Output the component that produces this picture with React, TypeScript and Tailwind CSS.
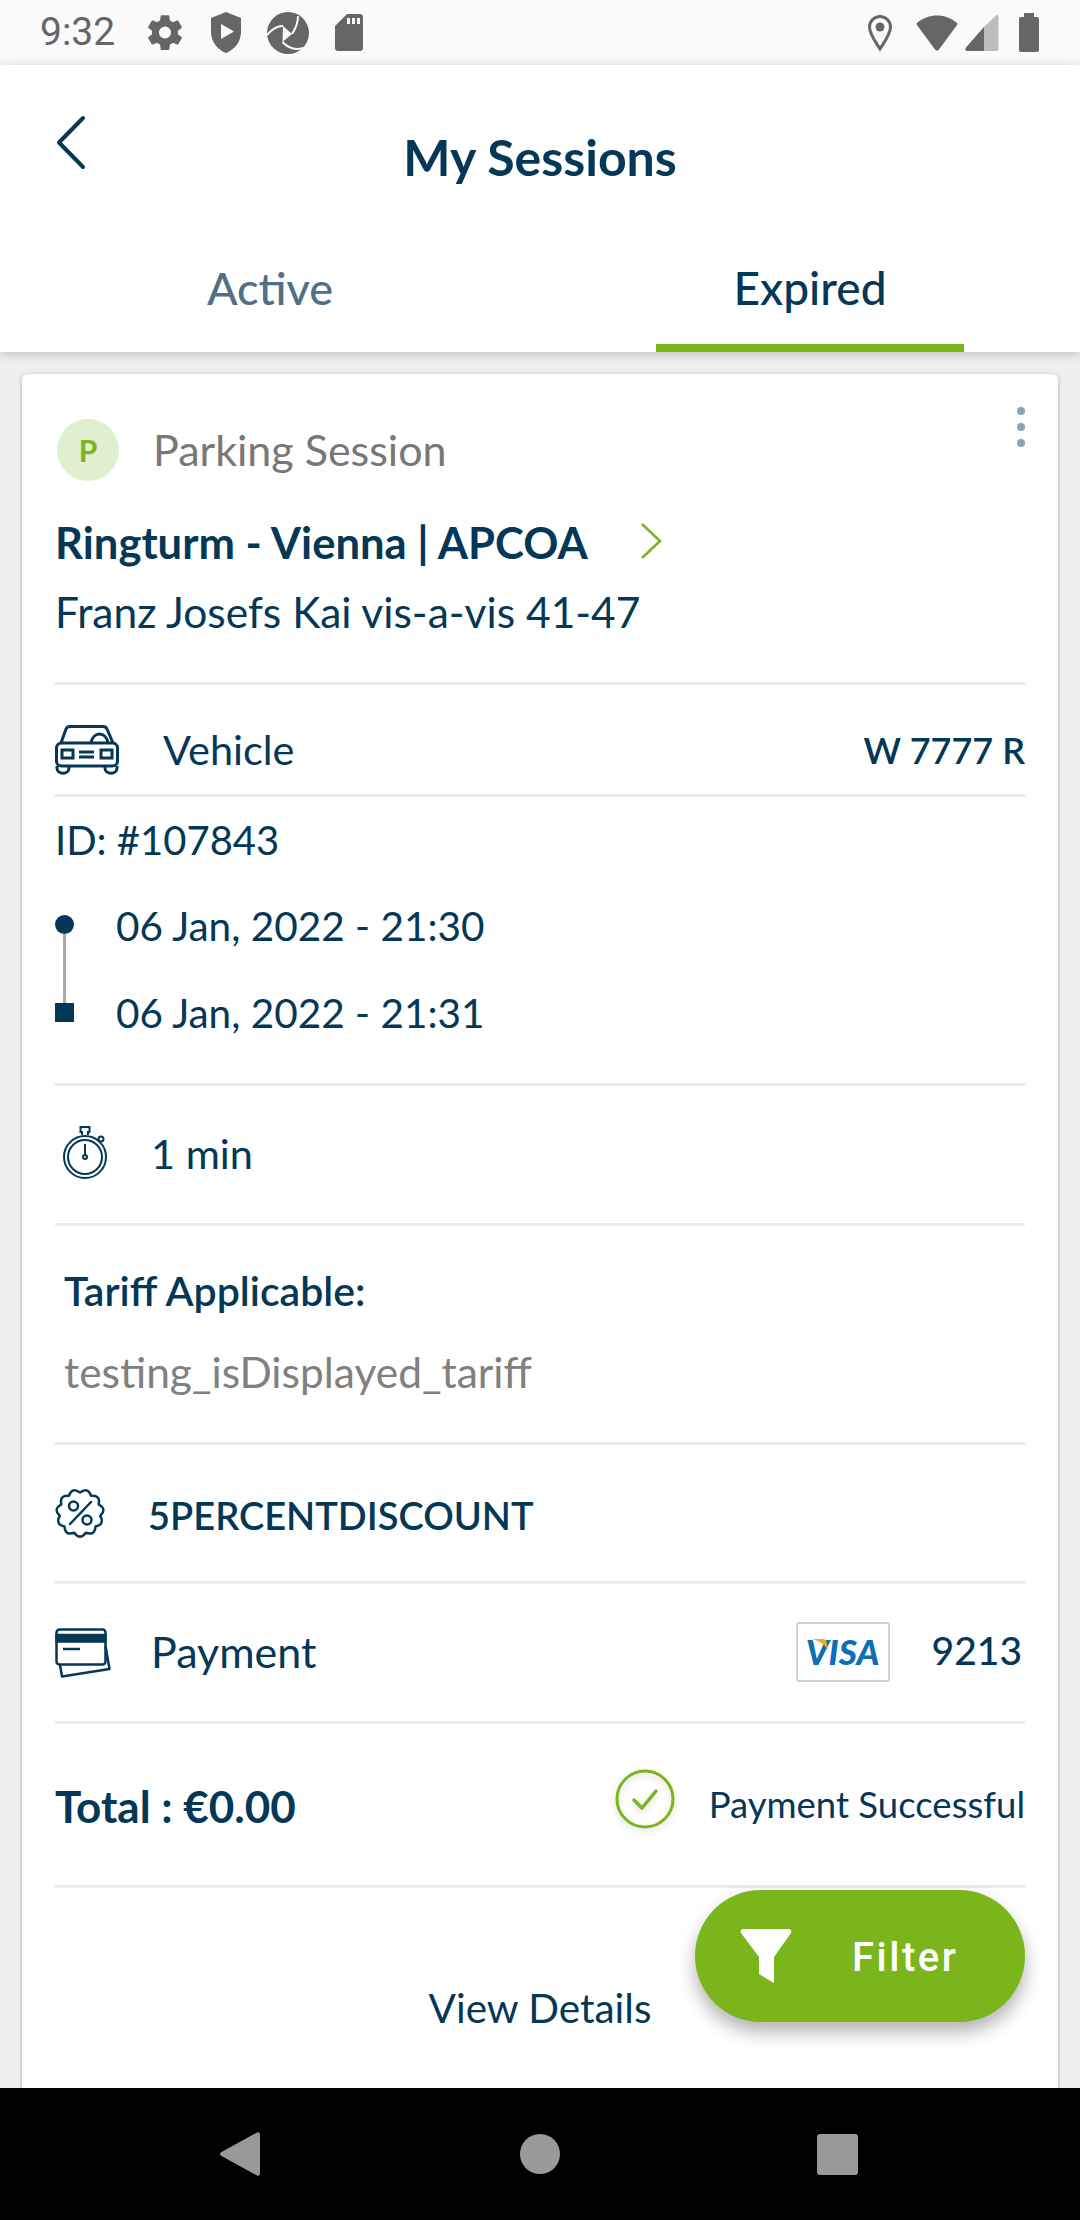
const navy = "#053757";

// scalloped badge outline for the voucher icon
const badgePath = (() => {
  const n = 11;
  const cx = 25;
  const cy = 26;
  const pt = (r: number, a: number) => `${(cx + r * Math.cos(a)).toFixed(2)} ${(cy + r * Math.sin(a)).toFixed(2)}`;
  let d = `M${pt(20.5, -Math.PI / 2)}`;
  for (let i = 0; i < n; i++) {
    const a = -Math.PI / 2 + (i * 2 * Math.PI) / n;
    const step = (2 * Math.PI) / n;
    d += ` Q${pt(27.5, a + step / 2)} ${pt(20.5, a + step)}`;
  }
  return d + " Z";
})();

function StatusBar() {
  return (
    <div className="flex h-[65px] shrink-0 items-center bg-[#fafafa] pl-[40px] pr-[41px] text-[#666666]">
      <span className="w-[74px] text-[39px] leading-[65px] font-['Roboto',sans-serif]">9:32</span>
      {/* gear */}
      <svg className="ml-[34px] h-[37px] w-[34px]" viewBox="2.2 2 19.6 20" fill="currentColor">
        <path
          fillRule="evenodd"
          d="M19.4 13c.04-.33.06-.66.06-1s-.02-.67-.06-1l2.11-1.65a.5.5 0 0 0 .12-.64l-2-3.46a.5.5 0 0 0-.61-.22l-2.49 1a7.3 7.3 0 0 0-1.69-.98l-.38-2.65A.49.49 0 0 0 14 2h-4a.49.49 0 0 0-.49.42l-.38 2.65c-.61.25-1.17.59-1.69.98l-2.49-1a.5.5 0 0 0-.61.22l-2 3.46a.5.5 0 0 0 .12.64L4.57 11c-.04.33-.07.66-.07 1s.03.67.07 1l-2.11 1.65a.5.5 0 0 0-.12.64l2 3.46c.13.22.39.3.61.22l2.49-1c.52.4 1.08.73 1.69.98l.38 2.65c.03.24.24.42.49.42h4c.25 0 .46-.18.49-.42l.38-2.65c.61-.25 1.17-.59 1.69-.98l2.49 1c.22.08.48 0 .61-.22l2-3.46a.5.5 0 0 0-.12-.64L19.4 13zM12 15.5a3.5 3.5 0 1 1 0-7 3.5 3.5 0 0 1 0 7z"
        />
      </svg>
      {/* shield with play */}
      <svg className="ml-[28px] h-[41px] w-[32px]" viewBox="0 0 32 41" fill="currentColor">
        <path
          fillRule="evenodd"
          d="M16 0 L31 6 V20 C31 30 24 38 16 41 C8 38 1 30 1 20 V6 Z M11 12 V27 L24 19.5 Z"
        />
      </svg>
      {/* aperture */}
      <svg className="ml-[25px] h-[44px] w-[42px]" viewBox="0 0 42 44">
        <circle cx="21" cy="22" r="21" fill="currentColor" />
        <path d="M16 15 L25 23 L15.5 31 Z" fill="#fafafa" />
        <g fill="none" stroke="#fafafa" strokeWidth="2">
          <path d="M16 15 C10 15 5 18 0 24" />
          <path d="M25 23 C29 17 31 12 31 5" />
          <path d="M15.5 31 C22 38 29 39 36 37" />
        </g>
      </svg>
      {/* sd card */}
      <svg className="ml-[26px] h-[37px] w-[28px]" viewBox="0 0 28 37" fill="currentColor">
        <path
          fillRule="evenodd"
          d="M12 0 H25 C26.7 0 28 1.3 28 3 V34 C28 35.7 26.7 37 25 37 H3 C1.3 37 0 35.7 0 34 V12 Z M12 4 V10 H15 V4 Z M17 4 V10 H20 V4 Z M22 4 V10 H25 V4 Z"
        />
      </svg>
      {/* location pin */}
      <svg className="ml-auto h-[38px] w-[26px]" viewBox="0 0 26 38">
        <path
          d="M13 35 C8 27 2.5 20 2.5 13 A10.5 10.5 0 0 1 23.5 13 C23.5 20 18 27 13 35 Z"
          fill="none"
          stroke="currentColor"
          strokeWidth="3"
        />
        <circle cx="13" cy="13" r="4.5" fill="currentColor" />
      </svg>
      {/* wifi */}
      <svg className="ml-[23px] h-[36px] w-[42px]" viewBox="0 0 42 36" fill="currentColor">
        <path d="M1 8 C12 -2 30 -2 41 8 C41.6 8.7 41.6 9.2 41 10 L23 34.5 C22 36 20 36 19 34.5 L1 10 C0.4 9.2 0.4 8.7 1 8 Z" />
      </svg>
      {/* signal */}
      <svg className="ml-[7px] h-[36px] w-[34px]" viewBox="0 0 34 36">
        <path d="M19 12 L0.5 33 C0 34.5 0.5 36 2 36 H19 Z" fill="currentColor" />
        <path d="M19 12 L31 0.5 C32.5 -0.5 33.5 0.5 33.5 2 V34 C33.5 35.3 32.8 36 31.5 36 H19 Z" fill="#bdbdbd" />
      </svg>
      {/* battery */}
      <svg className="ml-[20px] h-[39px] w-[20px]" viewBox="0 0 20 39" fill="currentColor">
        <path d="M5 0 H15 V4 H18 C19.2 4 20 4.8 20 6 V37 C20 38.2 19.2 39 18 39 H2 C0.8 39 0 38.2 0 37 V6 C0 4.8 0.8 4 2 4 H5 Z" />
      </svg>
    </div>
  );
}

function Header() {
  return (
    <div className="relative z-10 shrink-0 bg-white shadow-[0_2px_10px_rgba(0,0,0,0.22)]">
      <div className="relative flex h-[172px] justify-center pt-[68px]">
        <svg className="absolute left-[55px] top-[50px] h-[55px] w-[32px]" viewBox="0 0 32 55" fill="none">
          <path d="M28 3 L4 27.5 L28 52" stroke={navy} strokeWidth="4" strokeLinecap="round" strokeLinejoin="round" />
        </svg>
        <h1 className="text-[50px] leading-[48px] font-bold text-[#053757]">My Sessions</h1>
      </div>
      <div className="flex h-[115px]">
        <div className="flex w-[540px] justify-center pt-[29px] text-[45px] leading-[44px] font-medium text-[#4f7088]">
          Active
        </div>
        <div className="relative flex w-[540px] justify-center pt-[29px] text-[46px] leading-[44px] font-medium text-[#053757]">
          Expired
          <div className="absolute bottom-0 left-[116px] h-[8px] w-[308px] bg-[#7ab51b]" />
        </div>
      </div>
    </div>
  );
}

function Car() {
  return (
    <svg className="h-[50px] w-[64px]" viewBox="0 0 64 50" fill="none" stroke={navy} strokeWidth="3">
      <path d="M6 18 L11 4 C11.6 2.5 13 1.5 15 1.5 H48 C50 1.5 51.4 2.5 52 4 L58 18" strokeLinejoin="round" />
      <path d="M36 18 C38 6 51 6 53 18" />
      <rect x="1.5" y="18" width="61" height="23" rx="5" />
      <rect x="7" y="25" width="11" height="8" />
      <rect x="46" y="25" width="11" height="8" />
      <path d="M24 27 H39 M24 32 H39" />
      <path d="M2 41 V43 C2 50 14 50 14 43 V41 M50 41 V43 C50 50 62 50 62 43 V41" />
    </svg>
  );
}

function Stopwatch() {
  return (
    <svg className="mb-[6px] h-[56px] w-[46px]" viewBox="0 0 46 56" fill="none" stroke={navy} strokeWidth="2">
      <circle cx="23" cy="33" r="21" />
      <circle cx="23" cy="33" r="17" />
      <path d="M20 11 V8 H18.5 V3 H27.5 V8 H26 V11" />
      <path d="M23 20 V31" />
      <circle cx="23" cy="33" r="2" />
      <circle cx="39" cy="15" r="2.5" />
    </svg>
  );
}

function Discount() {
  return (
    <svg className="h-[52px] w-[50px]" viewBox="0 0 50 52" fill="none" stroke={navy} strokeWidth="2.5">
      <path d={badgePath} strokeLinejoin="round" />
      <circle cx="18.5" cy="19" r="4.5" />
      <circle cx="32" cy="33" r="4.5" />
      <path d="M15 37 L36 15" strokeLinecap="round" />
    </svg>
  );
}

function CardIcon() {
  return (
    <svg className="h-[50px] w-[56px]" viewBox="0 0 56 50" fill="none" stroke={navy} strokeWidth="2.5">
      <rect x="1.5" y="1.5" width="49" height="35" rx="3" />
      <path d="M1.5 7 H50.5 V13.5 H1.5 Z" fill={navy} />
      <path d="M8 21 H25" />
      <path d="M5 37 L7 48.5 L54.5 41 L50.5 18" strokeLinejoin="round" />
    </svg>
  );
}

export default function App() {
  return (
    <div className="relative flex h-[2220px] w-[1080px] flex-col overflow-hidden bg-[#efefef] font-['Lato',sans-serif] text-[#053757]">
      <StatusBar />
      <Header />

      <div className="min-h-0 flex-1 overflow-hidden px-[22px] pt-[22px]">
        <div className="rounded-[6px] bg-white px-[33px] pb-[80px] shadow-[0_1px_4px_rgba(0,0,0,0.3)]">
          {/* location */}
          <div className="relative h-[311px] border-b-[3px] border-[#ebebeb] pt-[45px]">
            <div className="flex h-[62px] items-center">
              <div className="ml-[2px] flex h-[62px] w-[62px] items-center justify-center rounded-full bg-[#dfefcf] text-[30px] font-bold text-[#7ab51b]">
                P
              </div>
              <span className="ml-[34px] text-[43px] text-[#777777]">Parking Session</span>
            </div>
            <div className="absolute right-0 top-[33px] flex flex-col gap-[8px]">
              <div className="h-[8px] w-[8px] rounded-full bg-[#8aa4ba]" />
              <div className="h-[8px] w-[8px] rounded-full bg-[#8aa4ba]" />
              <div className="h-[8px] w-[8px] rounded-full bg-[#8aa4ba]" />
            </div>
            <div className="mt-[36px] flex h-[50px] items-center">
              <span className="text-[43.6px] leading-[50px] font-bold">Ringturm - Vienna | APCOA</span>
              <svg className="ml-[52px] mb-[3px] h-[38px] w-[22px]" viewBox="0 0 22 38" fill="none">
                <path d="M2 2 L20 19 L2 36" stroke="#7ab51b" strokeWidth="2.5" />
              </svg>
            </div>
            <div className="mt-[20px] text-[42.5px] leading-[50px]">Franz Josefs Kai vis-a-vis 41-47</div>
          </div>

          {/* vehicle */}
          <div className="flex h-[112px] items-center border-b-[3px] border-[#ebebeb] pt-[20px]">
            <Car />
            <span className="ml-[44px] text-[41.5px]">Vehicle</span>
            <span className="ml-auto text-[36px] font-semibold">W 7777 R</span>
          </div>

          {/* times */}
          <div className="h-[289px] border-b-[3px] border-[#ebebeb] pt-[21px]">
            <div className="text-[40px] leading-[44px]">ID: #107843</div>
            <div className="mt-[42px] flex">
              <div className="mt-[11px] flex w-[19px] flex-col items-center">
                <div className="h-[19px] w-[19px] rounded-full bg-[#053757]" />
                <div className="h-[69px] w-[3px] bg-[#aaaaaa]" />
                <div className="h-[19px] w-[19px] bg-[#053757]" />
              </div>
              <div className="ml-[42px] flex flex-col gap-[43px] text-[40.5px] leading-[44px]">
                <span>06 Jan, 2022 - 21:30</span>
                <span>06 Jan, 2022 - 21:31</span>
              </div>
            </div>
          </div>

          {/* duration */}
          <div className="flex h-[140px] items-center border-b-[3px] border-[#ebebeb] pl-[7px]">
            <Stopwatch />
            <span className="ml-[43px] mt-[-2px] text-[41.5px]">1 min</span>
          </div>

          {/* tariff */}
          <div className="h-[219px] border-b-[3px] border-[#ebebeb] pl-[9px] pt-[43px]">
            <div className="text-[41px] leading-[44px] font-semibold">Tariff Applicable:</div>
            <div className="mt-[37px] text-[42.5px] leading-[44px] text-[#808080]">testing_isDisplayed_tariff</div>
          </div>

          {/* voucher */}
          <div className="flex h-[139px] items-center border-b-[3px] border-[#ebebeb]">
            <Discount />
            <span className="ml-[43px] mt-[4px] text-[38px] font-semibold">5PERCENTDISCOUNT</span>
          </div>

          {/* payment */}
          <div className="flex h-[140px] items-center border-b-[3px] border-[#ebebeb]">
            <CardIcon />
            <span className="ml-[40px] text-[43px]">Payment</span>
            <div className="relative ml-auto mb-[2px] flex h-[60px] w-[94px] items-center justify-center rounded-[3px] border-[2px] border-[#d2d2d2]">
              <svg className="absolute left-[14px] top-[15px] h-[12px] w-[20px]" viewBox="0 0 20 12">
                <path d="M0 0 H11 C13 0 14 1 14.5 3 L16 11 C13 5 7 2 0 0 Z" fill="#f4a81d" />
              </svg>
              <span className="mt-[-2px] text-[35px] leading-[40px] font-black italic text-[#0a6fb5]">VISA</span>
            </div>
            <span className="mb-[4px] ml-[42px] mr-[3px] text-[39px] font-medium">9213</span>
          </div>

          {/* total */}
          <div className="flex h-[164px] items-center border-b-[3px] border-[#ebebeb]">
            <span className="mt-[3px] text-[44px] font-bold">Total : €0.00</span>
            <svg
              className="ml-auto mb-[11px] h-[60px] w-[60px] drop-shadow-[0_3px_3px_rgba(0,0,0,0.15)]"
              viewBox="0 0 60 60"
              fill="none"
              stroke="#7ab51b"
            >
              <circle cx="30" cy="30" r="28" strokeWidth="3" />
              <path d="M19 31 L27 39 L41 22" strokeWidth="3.5" strokeLinecap="round" strokeLinejoin="round" />
            </svg>
            <span className="ml-[34px] text-[36.5px]">Payment Successful</span>
          </div>

          {/* details */}
          <div className="pt-[98px] text-center text-[40.5px] leading-[44px]">View Details</div>
        </div>
      </div>

      {/* filter button */}
      <div className="absolute left-[695px] top-[1890px] flex h-[132px] w-[330px] items-center rounded-full bg-[#7ab51b] pl-[45px] shadow-[0_10px_18px_rgba(0,0,0,0.3)]">
        <svg className="h-[54px] w-[52px]" viewBox="0 0 52 54" fill="white">
          <path d="M3 0 H49 C51 0 52 2 51 4 L34 28 V53 C34 54 33 54 32 53 L19 45 V28 L1 4 C0 2 1 0 3 0 Z" />
        </svg>
        <span className="ml-[60px] mt-[4px] text-[40px] font-medium tracking-[2.5px] text-white font-['Roboto',sans-serif]">
          Filter
        </span>
      </div>

      {/* android nav */}
      <div className="flex h-[132px] shrink-0 items-center bg-black">
        <svg className="ml-[220px] h-[44px] w-[40px]" viewBox="0 0 40 44" fill="#999999">
          <path d="M37 0.5 C39 -0.5 40 1 40 3 V41 C40 43 39 44.5 37 43.5 L1.5 24 C-0.5 23 -0.5 21 1.5 20 Z" />
        </svg>
        <div className="ml-[260px] h-[40px] w-[40px] rounded-full bg-[#999999]" />
        <div className="ml-[257px] h-[41px] w-[41px] rounded-[3px] bg-[#999999]" />
      </div>
    </div>
  );
}
